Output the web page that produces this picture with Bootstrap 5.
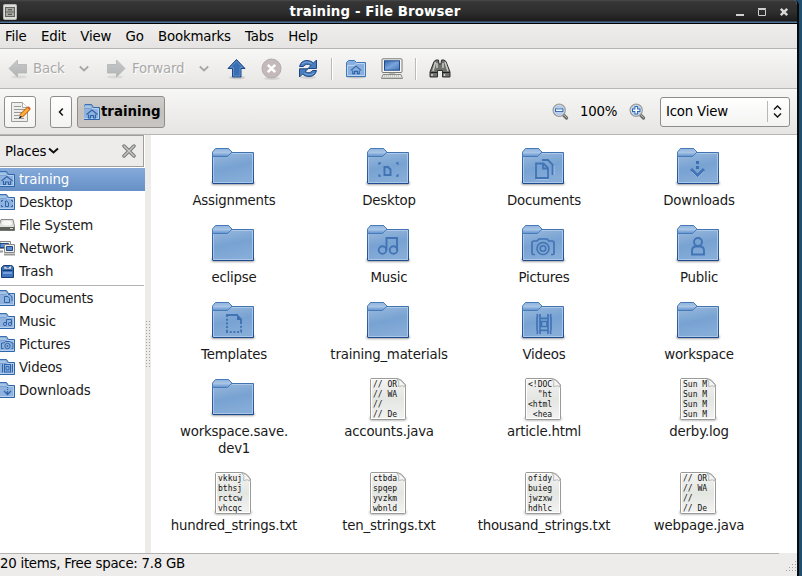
<!DOCTYPE html>
<html lang="en">
<head>
<meta charset="utf-8">
<title>training - File Browser</title>
<link href="https://cdn.jsdelivr.net/npm/bootstrap@5.3.0/dist/css/bootstrap.min.css" rel="stylesheet">
<script src="https://cdn.jsdelivr.net/npm/bootstrap@5.3.0/dist/js/bootstrap.bundle.min.js"></script>
<style>
body{font-family:"DejaVu Sans",sans-serif;font-size:13.33px;letter-spacing:-.2px;line-height:17px;color:#000;width:802px;height:576px;background:#1f4e6e;overflow:hidden}
svg{display:block;flex:none}
.win{width:799px;height:576px;background:#edeceb;border-right:2px solid #0a0a0a;border-top-right-radius:5px;overflow:hidden}
.titlebar{height:24px;background:linear-gradient(#4a4a4a 0,#353535 2px,#2e2e2e 12px,#1c1c1c 21px,#4f7298 22px,#4f7298 23px,#000 23px);color:#fff;font-weight:bold;letter-spacing:.12px}
.titlebar .caption{width:702px;margin-left:-1px;margin-top:-1px}
.titlebar svg:first-child{margin-left:3px}
.titlebar .wbtns{margin-left:16px}
.menus{height:25px;padding-left:5px;gap:14.4px;background:linear-gradient(#efeeec,#e5e4e2);border-bottom:1px solid #b5b3b0}
.tools{height:40px;padding-left:8px;background:linear-gradient(#f7f7f6,#e6e5e3);border-bottom:1px solid #b9b7b5;color:#aaa9a8;text-shadow:1px 1px #fff}
.locbar{height:46px;padding-left:4px;background:linear-gradient(#f7f7f6,#e6e5e3);border-bottom:1px solid #b9b7b5}
.vsep{width:2px;height:22px;border-left:1px solid #bcbab8;border-right:1px solid #fff;margin-top:1px}
.g11{margin-left:11px}.g12{margin-left:12px}.g13{margin-left:13px}.g14{margin-left:14px}.g17{margin-left:17px}
.t-back{width:51px;padding-left:5px}
.t-fwd{width:73px;padding-left:6px}
.gbtn{height:32px;border:1px solid #8f8d8a;border-radius:3px;background:linear-gradient(#fff,#f3f3f2);padding:0;color:#000}
.gbtn.edit{width:32px}
.gbtn.prev{width:22px;margin-left:14px}
.gbtn.pressed{width:88px;margin-left:5px;padding-left:5px;gap:1px;background:linear-gradient(#d0cecc,#c4c1be 50%,#c8c5c2);font-weight:bold;letter-spacing:0}
.viewctl{margin-right:7px}
.zoomtxt{width:49px;margin-left:11px}
.combo{width:130px;height:30px;margin-left:14px;padding-left:5px}
.combo .val{width:101px}
.combo .bar{width:1px;height:21px;background:#bab8b6;margin-right:5px}
.side{width:145px;background:#fff;color:#1a1a1a}
.sidehead{width:144px;height:32px;background:#edeceb;border:1px solid #a09e9b;border-left:0;color:#000;padding:0 7px 0 5px;margin-bottom:1px}
.place{height:23px;gap:4px}
.place svg{margin-bottom:1px}
.place.sel{background:linear-gradient(#85aada,#6690c6);color:#fff}
.sideline{height:1px;width:144px;margin:2px 0 1px;background:#b5b3b1}
.split{width:6px;background:#edeceb}
.files{width:646px;background:#fff;padding:9px 0 0 5px;align-content:flex-start;color:#1a1a1a}
.item{width:155px;height:77px;text-align:center}
.item.tall{height:94px}
.item svg{height:47px;width:47px}
.item span{display:block;margin:1px auto 0;width:140px;padding-left:1px}
.emb{fill:none;stroke:#4274b5}
.peek text{font:8px "DejaVu Sans Mono",monospace;letter-spacing:0;white-space:pre;fill:#111}
.status{height:23px;background:#edeceb}
.status .txt{width:779px;border-top:1px solid #b5b3b0;padding-top:1px;letter-spacing:-.25px}
.status svg{margin-bottom:3px}
</style>
</head>
<body>
<svg width="0" height="0" class="position-absolute">
<defs>
<linearGradient id="gf" x1="0" y1="0" x2=".25" y2="1"><stop offset="0" stop-color="#a3bfdf"/><stop offset=".6" stop-color="#77a2d2"/><stop offset="1" stop-color="#86acd8"/></linearGradient>
<linearGradient id="gt" x1="0" y1="0" x2="0" y2="1"><stop offset="0" stop-color="#8fb2dc"/><stop offset=".5" stop-color="#a9c5e6"/><stop offset="1" stop-color="#5f8fcb"/></linearGradient>
<linearGradient id="gs" x1="0" y1="0" x2="0" y2="1"><stop offset="0" stop-color="#4679b6"/><stop offset="1" stop-color="#1f4c8f"/></linearGradient>
<linearGradient id="gp" x1="0" y1="0" x2="0" y2="1"><stop offset="0" stop-color="#f4f4f3"/><stop offset=".5" stop-color="#e4e6e2"/><stop offset="1" stop-color="#f3f3f2"/></linearGradient>
<linearGradient id="ga" x1="0" y1="0" x2="0" y2="1"><stop offset="0" stop-color="#c9cacb"/><stop offset="1" stop-color="#b0b2b4"/></linearGradient>
<linearGradient id="gm" x1="0" y1="0" x2="1" y2="1"><stop offset="0" stop-color="#3467aa"/><stop offset=".5" stop-color="#7ba4dc"/><stop offset="1" stop-color="#4676b8"/></linearGradient>
<radialGradient id="gl"><stop offset="0" stop-color="#dceafa"/><stop offset="1" stop-color="#8fb5e3"/></radialGradient>
<filter id="soft" x="-20%" y="-200%" width="140%" height="500%"><feGaussianBlur stdDeviation=".9"/></filter>
<symbol id="folder" viewBox="0 0 47 47">
<rect x="1.500" y="37.500" width="43" height="3" rx="1.500" fill="#333" opacity=".65" filter="url(#soft)"/>
<path d="M2.500 39V9.500L6 4.500H18.500L22 8.500H43.500V39.500H3z" fill="url(#gf)" stroke="url(#gs)"/>
<path d="M3.500 38.500V12M42.500 9.500V38.500M3.500 38.500H42.500M22 9.500H42.500" fill="none" stroke="#bcd3ee" stroke-opacity=".7"/>
<path d="M2.500 12.500V8L5.500 4.500H18.500L22 8L17.500 12.500z" fill="url(#gt)" stroke="#4278b8" stroke-width=".9"/>
</symbol>
<symbol id="sf" viewBox="0 0 16 16">
<path d="M-.5 15.500V3.500L1 .5H7.500L9.500 3.500H15.500V15.500z" fill="#8fb3de" stroke="#2e66ad"/>
<path d="M0 4.500H14.500V14.500H0" fill="none" stroke="#b5cfec"/>
<path d="M0 3.500V2L1.500 1H7L8.500 3.500L7 4.500H0z" fill="#a6c4e6" stroke="#5587c3" stroke-width=".6"/>
</symbol>
<symbol id="zoomglass" viewBox="0 0 17 17"><path d="M11.500 12L14.500 15" stroke="#6d6f6b" stroke-width="3.200" stroke-linecap="round"/><path d="M12 12L14.500 14.500" stroke="#b7b8b5" stroke-linecap="round"/><circle cx="7.200" cy="7.200" r="6" fill="url(#gl)" stroke="#9a9c98" stroke-width="1.400"/><circle cx="7.200" cy="7.200" r="5" fill="none" stroke="#e7eef7" stroke-width=".8"/></symbol>
<symbol id="page" viewBox="0 0 47 47">
<rect x="4.500" y="41.500" width="37" height="4" rx="2" fill="#555" opacity=".5" filter="url(#soft)"/>
<path d="M7 3.500H32.500Q37 4 40.500 10V43.500Q40.500 44.500 39.500 44.500H6.500Q5.500 44.500 5.500 43.500V4.500Q5.500 3.500 7 3.500z" fill="url(#gp)" stroke="#9a9b97"/>
<path d="M6.500 43.500V4.500H31M39.500 12V43.500H6.500" fill="none" stroke="#fff"/>
</symbol>
<symbol id="curl" viewBox="0 0 47 47"><path d="M32 4Q35 7 33.500 11.500Q38 9.500 40.500 12.500Q39 6 32 4z" fill="#f5f5f4" stroke="#aaaba8" stroke-width=".8"/></symbol>
<symbol id="home" viewBox="0 0 16 16"><path d="M2.500 10L8 5.500L13.500 10M4.500 10V13.500H6.500V11H9.500V13.500H11.500V10" fill="none" stroke="#2f64a8" stroke-width="1.200"/></symbol>
</defs>
</svg>

<div class="win d-flex flex-column">
  <header class="titlebar d-flex align-items-center flex-shrink-0">
    <svg width="14" height="16"><rect x=".5" y=".5" width="13" height="15" rx="1" fill="#dcdcd8" stroke="#b6b6b0"/><rect x="2.500" y="3.500" width="9" height="9" fill="#a9aaa5" stroke="#60625d"/><path d="M2 8H12" stroke="#60625d"/><path d="M5 5.800H9M5 10.300H9" stroke="#44463f"/></svg>
    <div class="caption text-center flex-shrink-0 ps-3">training - File Browser</div>
    <svg class="wbtns" width="56" height="14" viewBox="734 5 56 14"><path d="M736 15H744" stroke="#cfcfcf" stroke-width="2"/><path d="M758.500 9.500H765.500V15.500H758.500zM758 8.500H766" fill="none" stroke="#cfcfcf"/><path d="M780.800 8.800L787.200 15.200M787.200 8.800L780.800 15.200" stroke="#d8d8d8" stroke-width="2.400"/></svg>
  </header>

  <nav class="menus d-flex align-items-center flex-shrink-0">
    <span>File</span><span>Edit</span><span>View</span><span>Go</span><span>Bookmarks</span><span>Tabs</span><span>Help</span>
  </nav>

  <div class="tools d-flex align-items-center flex-shrink-0">
    <svg width="20" height="22"><ellipse cx="11" cy="19" rx="8" ry="1.500" fill="#ccc" opacity=".6"/><path d="M1 10.500L9.500 2V6.500H18.500V15H9.500V19z" fill="url(#ga)" stroke="#b2b3b4" stroke-width=".8"/></svg>
    <span class="t-back">Back</span>
    <svg width="10" height="8"><path d="M.8 1.500L5 5.500L9.200 1.500" fill="none" stroke="#a8a6a4" stroke-width="1.800"/></svg>
    <svg class="g17" width="20" height="22"><ellipse cx="9" cy="19" rx="8" ry="1.500" fill="#ccc" opacity=".6"/><path d="M19 10.500L10.500 2V6.500H1.500V15H10.500V19z" fill="url(#ga)" stroke="#b2b3b4" stroke-width=".8"/></svg>
    <span class="t-fwd">Forward</span>
    <svg width="10" height="8"><path d="M.8 1.500L5 5.500L9.200 1.500" fill="none" stroke="#a8a6a4" stroke-width="1.800"/></svg>
    <svg class="g17" width="22" height="22"><ellipse cx="11" cy="19.500" rx="8" ry="1.800" fill="#aaa" opacity=".5"/><path d="M10.500 1.500L19 10.500H15V19H6.500V10.500H2z" fill="#3a6eb3" stroke="#1d4684"/><path d="M10.500 3.200L16.500 9.500H14V18H7.500V9.500H4.500z" fill="none" stroke="#6f9bd2" stroke-width=".7"/></svg>
    <svg class="g12" width="24" height="22"><ellipse cx="12" cy="20.500" rx="8" ry="1.500" fill="#bbb" opacity=".5"/><circle cx="11.500" cy="10.500" r="9.500" fill="#c3bab9" stroke="#b3acab"/><path d="M7.800 6.800L15.200 14.200M15.200 6.800L7.800 14.200" stroke="#fff" stroke-width="2.600"/></svg>
    <svg class="g14" width="20" height="22"><ellipse cx="10" cy="19.500" rx="8" ry="1.500" fill="#bbb" opacity=".5"/><path d="M1.500 8.500Q3 2.500 9 2.500Q13 2.500 15.500 5L18.500 2V10.500H10L13 7.500Q8 4.500 5.500 8.500z" fill="#4a7dc0" stroke="#1d4684"/><path d="M18.500 12.500Q17 18.500 11 18.500Q7 18.500 4.500 16L1.500 19V10.800H10L7 13.500Q12 16.500 14.500 12.500z" fill="#4a7dc0" stroke="#1d4684"/><path d="M4 6Q8 2.500 13.500 5.500M16 15Q12 18.500 6.500 15.500" fill="none" stroke="#8db2e0" stroke-width=".8"/></svg>
    <div class="vsep g13"></div>
    <svg class="g12" width="22" height="22"><ellipse cx="11" cy="19" rx="10" ry="1.500" fill="#999" opacity=".5"/><path d="M1.500 18.500V4.500L3.500 2.500H9.500L11.500 4.500H20.500V18.500z" fill="#88afdd" stroke="#3e77ba"/><path d="M2.500 17.500V7.500H9L11.500 5.500H19.500V17.500z" fill="none" stroke="#bcd4ef"/><use href="#home" x="3.500" y="3" width="15" height="15"/></svg>
    <svg class="g13" width="24" height="22"><rect x="2" y=".8" width="20" height="13.700" rx="1" fill="#f7f7f6" stroke="#777974"/><rect x="4.500" y="2.800" width="15" height="9.400" fill="url(#gm)" stroke="#1f4b8b"/><path d="M9 15H15M3 16.500H21L22.500 20.500H1.500z" fill="#e8e9e4" stroke="#888a85"/><path d="M4 18H20M3.500 19.500H20.500" stroke="#a9aba5" stroke-dasharray="1 1"/></svg>
    <div class="vsep g11"></div>
    <svg class="g11" width="24" height="22"><path d="M6 3.500L8 2H10.500L11 6H13L13.500 2H16L18 3.500L22 14V19H14.500V12.500H9.500V19H2V14z" fill="#6e716c" stroke="#2e3033"/><path d="M7.500 4L5 13M17 4L20 13M9 5V10M15 5V10" stroke="#c9cbc6" stroke-width="1.500"/><path d="M2.500 14.500H9M14.500 14.500H21.500" stroke="#1f2120"/><path d="M4 16V18M16.500 16V18" stroke="#d2d4cf" stroke-width="1.500"/></svg>
  </div>

  <div class="locbar d-flex align-items-center flex-shrink-0">
    <button class="gbtn edit d-flex align-items-center justify-content-center"><svg width="22" height="24"><path d="M2.500 2.500H13.500L18.500 7.500V21.500H2.500z" fill="#eeefec" stroke="#9b9d99"/><path d="M13.500 2.500V7.500H18.500" fill="#fff" stroke="#aaa"/><path d="M5 6.500H12M5 9.500H16M5 12.500H14M5 15.500H11M5 18.500H15" stroke="#989a96"/><path d="M20 8L12 16" stroke="#bf5c00" stroke-width="4.400"/><path d="M19.500 8.500L12 16" stroke="#fcaf3e" stroke-width="2.600"/><path d="M10.500 18L12.500 17L11.500 16z" fill="#222" stroke="#222"/><path d="M19 7L21 9" stroke="#e25b2a" stroke-width="2"/></svg></button>
    <button class="gbtn prev d-flex align-items-center justify-content-center"><svg width="6" height="10"><path d="M4.800 1.500L1.500 5L4.800 8.500" fill="none" stroke="#111" stroke-width="1.500"/></svg></button>
    <button class="gbtn pressed d-flex align-items-center"><svg width="17" height="17"><use href="#sf" x="1" y="1" width="16" height="16"/><use href="#home" x="1" y="1.500" width="16" height="16"/></svg><span>training</span></button>
    <div class="viewctl d-flex align-items-center ms-auto">
      <svg width="17" height="17"><use href="#zoomglass"/><path d="M3 7.200H11.400" stroke="#2f66b0" stroke-width="3.400"/><path d="M4 7.200H10.400" stroke="#fff" stroke-width="1.600"/></svg>
      <span class="zoomtxt">100%</span>
      <svg width="17" height="17"><use href="#zoomglass"/><path d="M3 7.200H11.400M7.200 3V11.400" stroke="#2f66b0" stroke-width="3.400"/><path d="M4 7.200H10.400M7.200 4V10.400" stroke="#fff" stroke-width="1.600"/></svg>
      <div class="gbtn combo d-flex align-items-center"><span class="val">Icon View</span><div class="bar"></div><svg width="9" height="13"><path d="M1 4.500L4.500 1L8 4.500M1 8.500L4.500 12L8 8.500" fill="none" stroke="#111" stroke-width="1.400"/></svg></div>
    </div>
  </div>

  <main class="d-flex flex-grow-1">
    <aside class="side flex-shrink-0">
      <div class="sidehead d-flex align-items-center"><span>Places</span><svg width="13" height="8"><path d="M3 1.500L7.500 5.500L12 1.500" fill="none" stroke="#111" stroke-width="2"/></svg><svg width="14" height="14" class="ms-auto"><path d="M2 2L12 12M12 2L2 12" stroke="#73756f" stroke-width="3.400" stroke-linecap="round"/><path d="M2 2L12 12M12 2L2 12" stroke="#c9cac6" stroke-width="1.500" stroke-linecap="round"/></svg></div>
      <div class="place sel d-flex align-items-center"><svg width="15" height="16"><use href="#sf" x="-1" width="16" height="16"/><use href="#home" x="-1" width="16" height="16"/></svg><span>training</span></div>
      <div class="place d-flex align-items-center"><svg width="15" height="16"><use href="#sf" x="-1" width="16" height="16"/><path d="M1.500 8V6.500H3M11 6.500H12.500V8M1.500 11V12.500H3M11 12.500H12.500V11M5.500 7V12.500H8.500V9L7 7z" fill="none" stroke="#2f64a8"/></svg><span>Desktop</span></div>
      <div class="place d-flex align-items-center"><svg width="15" height="16"><path d="M-1 9L1 2.500H13L14.500 9V13.500H-1z" fill="#dfe0dc" stroke="#898b86"/><path d="M0 10H14.500V13.500H0z" fill="#5d5f5b"/><ellipse cx="7" cy="6" rx="5" ry="2.500" fill="#f7f7f5"/><path d="M10 11.500H13" stroke="#d0e0c0"/></svg><span>File System</span></div>
      <div class="place d-flex align-items-center"><svg width="15" height="16"><path d="M0 1.500H10.500V8.500H0z" fill="#eee" stroke="#888"/><path d="M0 3.500H8.500V7.500H0z" fill="#5d8fd0" stroke="#204a87"/><path d="M4.500 4.500H14.500V12.500H4.500z" fill="#eee" stroke="#888"/><path d="M6.500 6.500H12.500V10.500H6.500z" fill="#5d8fd0" stroke="#204a87"/><path d="M4 14.500H15M0 11.500H3" stroke="#999b96" stroke-width="2"/></svg><span>Network</span></div>
      <div class="place d-flex align-items-center"><svg width="15" height="16"><path d="M1.500 4.500L3.500 2.500H12L13.500 4.500V14.500H1.500z" fill="#3e74bb" stroke="#173d78"/><path d="M4 3L8 5L11 2.500L11.500 6H4z" fill="#eef1f4" stroke="#315b94" stroke-width=".6"/><path d="M2.500 7.500H12.500" stroke="#133a73"/><path d="M3 10H12" stroke="#73a0dc" stroke-width="2"/></svg><span>Trash</span></div>
      <div class="sideline"></div>
      <div class="place d-flex align-items-center"><svg width="15" height="16"><use href="#sf" x="-1" width="16" height="16"/><path d="M4.500 6.500H8L9.500 8.500V12.500H4.500zM8 4.500H10L12 7V11" fill="none" stroke="#2f64a8"/></svg><span>Documents</span></div>
      <div class="place d-flex align-items-center"><svg width="15" height="16"><use href="#sf" x="-1" width="16" height="16"/><path d="M6.500 11V6.500H11.500V11" fill="none" stroke="#2f64a8"/><circle cx="5" cy="11" r="1.600" fill="none" stroke="#2f64a8"/><circle cx="10" cy="11" r="1.600" fill="none" stroke="#2f64a8"/></svg><span>Music</span></div>
      <div class="place d-flex align-items-center"><svg width="15" height="16"><use href="#sf" x="-1" width="16" height="16"/><path d="M3.500 12.500H1.500V7H4L5.500 5.500H10L11.500 7H13V12.500H11.500" fill="none" stroke="#2f64a8"/><circle cx="7.500" cy="10" r="2.700" fill="none" stroke="#2f64a8"/><circle cx="7.500" cy="10" r=".9" fill="#2f64a8"/></svg><span>Pictures</span></div>
      <div class="place d-flex align-items-center"><svg width="15" height="16"><use href="#sf" x="-1" width="16" height="16"/><path d="M2.500 5V13.500M4.500 5V13.500M10.500 5V13.500M12.500 5V13.500M4.500 5.500H10.500M4.500 13H10.500M6 7.500H9V11H6z" fill="none" stroke="#2f64a8"/></svg><span>Videos</span></div>
      <div class="place d-flex align-items-center"><svg width="15" height="16"><use href="#sf" x="-1" width="16" height="16"/><path d="M7.500 5V6M7.500 7V8M7.500 9V12M4 9L7.500 12.500L11 9" fill="none" stroke="#2f64a8" stroke-width="1.300"/></svg><span>Downloads</span></div>
    </aside>
    <div class="split d-flex align-items-center flex-shrink-0"><svg width="6" height="48"><defs><pattern id="dots" width="3" height="3" patternUnits="userSpaceOnUse"><rect x="1" y="1" width="1" height="1" fill="#a5a3a0"/></pattern></defs><rect width="6" height="48" fill="url(#dots)"/></svg></div>

    <section class="files d-flex flex-wrap flex-shrink-0">
      <div class="item d-flex flex-column align-items-center"><svg><use href="#folder"/></svg><span>Assignments</span></div>
      <div class="item d-flex flex-column align-items-center"><svg><use href="#folder"/><path class="emb" d="M14 21V19H16M31 19H33V21M14 30V32H16M31 32H33V30" stroke-width="1.300"/><path class="emb" d="M19.500 23H23L25.500 25.500V31H19.500z" stroke-width="2"/></svg><span>Desktop</span></div>
      <div class="item d-flex flex-column align-items-center"><svg><use href="#folder"/><path d="M16.200 35.300H29M34 31V22" stroke="#a9c6e8" fill="none"/><path class="emb" d="M16 19.500H23.500L28 24V34H16zM23 19.500V24.500H28M22 16H28L32.500 20.500V31" stroke-width="1.800"/></svg><span>Documents</span></div>
      <div class="item d-flex flex-column align-items-center"><svg><use href="#folder"/><path d="M21 17H24V20H21zM21 22H24V25H21z" fill="#3c6fb2"/><path class="emb" d="M16 25L22.500 31.500L29 25" stroke-width="3"/><path d="M16.500 27.500L22.500 33.600L29 27.500" fill="none" stroke="#a9c6e8" stroke-width=".7"/></svg><span>Downloads</span></div>

      <div class="item d-flex flex-column align-items-center"><svg><use href="#folder"/></svg><span>eclipse</span></div>
      <div class="item d-flex flex-column align-items-center"><svg><use href="#folder"/><path class="emb" d="M21.500 29V17H32V29" stroke-width="1.900"/><g class="emb" stroke-width="1.900"><circle cx="17.500" cy="29" r="3.800"/><circle cx="28.500" cy="29" r="3.800"/></g></svg><span>Music</span></div>
      <div class="item d-flex flex-column align-items-center"><svg><use href="#folder"/><path class="emb" d="M15 33.500H13Q12 33.500 12 32V22Q12 20 14 20H17L19 18H27L29 20H32Q34 20 34 22V32Q34 33.500 33 33.500H31" stroke-width="1.700"/><g class="emb" stroke-width="1.600"><circle cx="23" cy="27.500" r="6"/><circle cx="23" cy="27.500" r="2.800"/></g></svg><span>Pictures</span></div>
      <div class="item d-flex flex-column align-items-center"><svg><use href="#folder"/><g class="emb" stroke-width="1.900"><circle cx="23" cy="21" r="4"/><path d="M17 33.500V30Q17 25.500 21 25.500H25Q29 25.500 29 30V33.500z"/></g></svg><span>Public</span></div>

      <div class="item d-flex flex-column align-items-center"><svg><use href="#folder"/><path d="M27 16L32 21V22H27z" fill="#3c6fb2"/><path class="emb" d="M16 17H28M31 21V24" stroke-width="2"/><path class="emb" d="M17 17V35M31 24V35M16 34H32" stroke-width="2" stroke-dasharray="2 1.700"/></svg><span>Templates</span></div>
      <div class="item d-flex flex-column align-items-center"><svg><use href="#folder"/></svg><span>training_materials</span></div>
      <div class="item d-flex flex-column align-items-center"><svg><use href="#folder"/><path class="emb" d="M17 16Q18 18 17 20V31Q18 34 17 36M31 16Q30 18 31 20V31Q30 34 31 36M20 16V36M28 16V36M20 20.300H28M20 32.300H28M21.500 23.500H27V28.500H21.500z" stroke-width="1.700"/></svg><span>Videos</span></div>
      <div class="item d-flex flex-column align-items-center"><svg><use href="#folder"/></svg><span>workspace</span></div>

      <div class="item tall d-flex flex-column align-items-center"><svg><use href="#folder"/></svg><span>workspace.save.<br>dev1</span></div>
      <div class="item tall peek d-flex flex-column align-items-center"><svg><use href="#page"/><text x="8" y="12">// OR</text><text x="8" y="22">// WA</text><text x="8" y="32">//</text><text x="8" y="42">// De</text><use href="#curl"/></svg><span>accounts.java</span></div>
      <div class="item tall peek d-flex flex-column align-items-center"><svg><use href="#page"/><text x="8" y="12">&lt;!DOC</text><text x="8" y="22">  "ht</text><text x="8" y="32">&lt;html</text><text x="8" y="42"> &lt;hea</text><use href="#curl"/></svg><span>article.html</span></div>
      <div class="item tall peek d-flex flex-column align-items-center"><svg><use href="#page"/><text x="8" y="12">Sun M</text><text x="8" y="22">Sun M</text><text x="8" y="32">Sun M</text><text x="8" y="42">Sun M</text><use href="#curl"/></svg><span>derby.log</span></div>

      <div class="item peek d-flex flex-column align-items-center"><svg><use href="#page"/><text x="8" y="12">vkkuj</text><text x="8" y="22">bthsj</text><text x="8" y="32">rctcw</text><text x="8" y="42">vhcqc</text><use href="#curl"/></svg><span>hundred_strings.txt</span></div>
      <div class="item peek d-flex flex-column align-items-center"><svg><use href="#page"/><text x="8" y="12">ctbda</text><text x="8" y="22">spqep</text><text x="8" y="32">yvzkm</text><text x="8" y="42">wbnld</text><use href="#curl"/></svg><span>ten_strings.txt</span></div>
      <div class="item peek d-flex flex-column align-items-center"><svg><use href="#page"/><text x="8" y="12">ofidy</text><text x="8" y="22">buieg</text><text x="8" y="32">jwzxw</text><text x="8" y="42">hdhlc</text><use href="#curl"/></svg><span>thousand_strings.txt</span></div>
      <div class="item peek d-flex flex-column align-items-center"><svg><use href="#page"/><text x="8" y="12">// OR</text><text x="8" y="22">// WA</text><text x="8" y="32">//</text><text x="8" y="42">// De</text><use href="#curl"/></svg><span>webpage.java</span></div>
    </section>
  </main>

  <footer class="status d-flex flex-shrink-0">
    <div class="txt flex-shrink-0">20 items, Free space: 7.8 GB</div>
    <svg width="12" height="12" class="mt-auto ms-auto"><g fill="#a5a3a0"><path d="M10 0h1v1h-1zM7 3h1v1H7zM10 3h1v1h-1zM4 6h1v1H4zM7 6h1v1H7zM10 6h1v1h-1zM1 9h1v1H1zM4 9h1v1H4zM7 9h1v1H7zM10 9h1v1h-1z"/></g></svg>
  </footer>
</div>
</body>
</html>
